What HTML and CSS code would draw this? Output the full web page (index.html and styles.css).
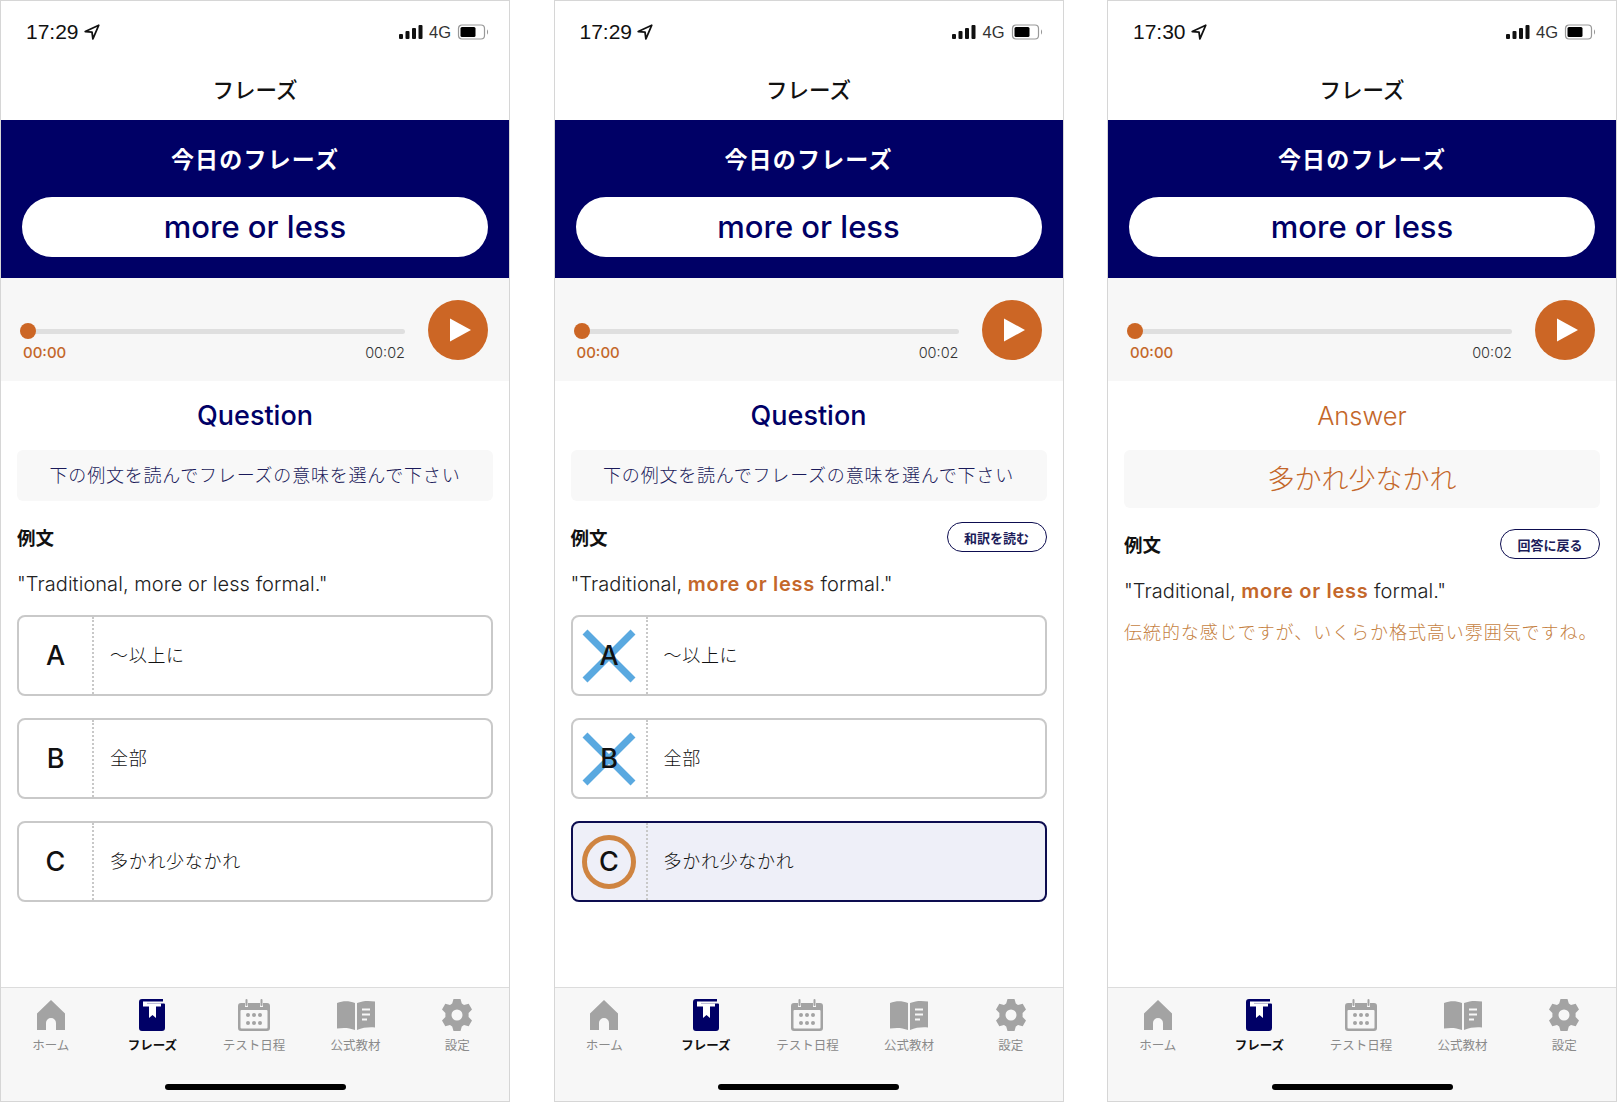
FILE: index.html
```html
<!DOCTYPE html>
<html lang="ja">

<head>
  <meta charset="UTF-8">
  <meta name="viewport" content="width=device-width, initial-scale=1.0">
  <title>フレーズ</title>
  <link rel="stylesheet" href="styles.css">
</head>

<body>

  <!-- Shared icons -->
  <svg class="icon-defs" width="0" height="0">
    <symbol id="i-arrow" viewBox="0 0 16 16">
      <path d="M14 2 2 7.6l6 .6.8 6z" fill="none" stroke="#111" stroke-width="1.6" stroke-linejoin="round" />
    </symbol>
    <symbol id="i-signal" viewBox="0 0 24 14">
      <rect x="0" y="9" width="4" height="5" rx="1" />
      <rect x="6.5" y="6" width="4" height="8" rx="1" />
      <rect x="13" y="3" width="4" height="11" rx="1" />
      <rect x="19.5" y="0" width="4" height="14" rx="1" />
    </symbol>
    <symbol id="i-battery" viewBox="0 0 32 16">
      <rect x="1" y="1" width="26" height="14" rx="3.5" fill="none" stroke="#999" stroke-width="1.2" />
      <rect x="3" y="3" width="15" height="10" rx="1.5" fill="#000" />
      <path d="M29.5 5.5c1.4.5 1.4 4.500 0 5z" fill="#999" />
    </symbol>
    <symbol id="i-play" viewBox="0 0 60 60">
      <circle cx="30" cy="30" r="30" fill="#cc6625" />
      <path d="M22 18.500 43 30 22 41.500z" fill="#fff" />
    </symbol>
    <symbol id="i-cross" viewBox="0 0 54 54">
      <path d="M3 3 51 51M51 3 3 51" stroke="#5aa9e0" stroke-width="7" />
    </symbol>
    <symbol id="i-ring" viewBox="0 0 54 54">
      <circle cx="27" cy="27" r="24.500" fill="none" stroke="#cf8441" stroke-width="5" />
    </symbol>
    <symbol id="i-home" viewBox="0 0 30 32">
      <path d="M15 1 29 14.500V31H20V24a5 5 0 0 0-10 0v7H1V14.500z" fill="#a3a3a3" />
    </symbol>
    <symbol id="i-book" viewBox="0 0 26 32">
      <path d="M3 0H24V2.500H8V4.500H25a1 1 0 0 1 1 1V29a3 3 0 0 1-3 3H3a3 3 0 0 1-3-3V3a3 3 0 0 1 3-3z" fill="#000066" />
      <path d="M4 2.500H8V4.500H22V7.500H17V19L13.500 16 10 19V7.500H4z" fill="#fff" />
    </symbol>
    <symbol id="i-calendar" viewBox="0 0 32 32">
      <path d="M3 4H7V8H10V4H22V8H25V4H29a3 3 0 0 1 3 3V29a3 3 0 0 1-3 3H3a3 3 0 0 1-3-3V7a3 3 0 0 1 3-3z" fill="#a3a3a3" />
      <rect x="7.500" y="0" width="2" height="7" rx="1" fill="#a3a3a3" />
      <rect x="22.500" y="0" width="2" height="7" rx="1" fill="#a3a3a3" />
      <rect x="2.500" y="11" width="27" height="18.500" rx="1" fill="#f7f7f7" />
      <g fill="#a3a3a3">
        <circle cx="10" cy="16" r="2" />
        <circle cx="16" cy="16" r="2" />
        <circle cx="22" cy="16" r="2" />
        <circle cx="10" cy="24" r="2" />
        <circle cx="16" cy="24" r="2" />
        <circle cx="22" cy="24" r="2" />
      </g>
    </symbol>
    <symbol id="i-reader" viewBox="0 0 38 30">
      <path d="M0 3C6 .5 12 .5 18 3V30C12 27.500 6 27.500 0 28.500z" fill="#a3a3a3" />
      <path d="M20 3C26 .5 32 .5 38 1.500V27.500C32 27 26 27.500 20 30z" fill="#a3a3a3" />
      <path d="M25 9.500H33M25 14.500H33M25 19.500H30" stroke="#f7f7f7" stroke-width="2" />
    </symbol>
    <symbol id="i-gear" viewBox="0 0 30 32">
      <path fill-rule="evenodd" fill="#a3a3a3" d="M11.500 0H18.500L19.800 4.600 22 5.900 26.700 4.700 30 10.500 26.600 14V18L30 21.500 26.700 27.300 22 26.100 19.800 27.400 18.500 32H11.500L10.200 27.400 8 26.100 3.300 27.300 0 21.500 3.400 18V14L0 10.500 3.300 4.700 8 5.900 10.200 4.600zM15 10.500a5.500 5.500 0 1 0 0 11 5.500 5.500 0 0 0 0-11z" />
    </symbol>
  </svg>

  <!-- Phone 1: question -->
  <section class="phone">
    <div class="status-bar">
      <div class="status-left">17:29 <svg class="arrow"><use href="#i-arrow" /></svg></div>
      <div class="status-right">
        <svg class="signal"><use href="#i-signal" /></svg><span>4G</span><svg class="battery"><use href="#i-battery" /></svg>
      </div>
    </div>
    <h2 class="nav-title">フレーズ</h2>
    <div class="hero">
      <p class="hero-label">今日のフレーズ</p>
      <div class="hero-pill">more or less</div>
    </div>
    <div class="player">
      <div class="player-track">
        <div class="track"><span class="thumb"></span></div>
        <div class="times"><span class="now">00:00</span><span>00:02</span></div>
      </div>
      <svg class="play"><use href="#i-play" /></svg>
    </div>
    <div class="content">
      <h3 class="section-title">Question</h3>
      <div class="prompt">下の例文を読んでフレーズの意味を選んで下さい</div>
      <div class="example-head">
        <span class="example-label">例文</span>
      </div>
      <p class="sentence">"Traditional, more or less formal."</p>
      <div class="options">
        <div class="option">
          <div class="option-key">A</div>
          <div class="option-text">〜以上に</div>
        </div>
        <div class="option">
          <div class="option-key">B</div>
          <div class="option-text">全部</div>
        </div>
        <div class="option">
          <div class="option-key">C</div>
          <div class="option-text">多かれ少なかれ</div>
        </div>
      </div>
    </div>
    <nav class="tabbar">
      <div class="tabs">
        <div class="tab"><svg class="tab-home"><use href="#i-home" /></svg><span>ホーム</span></div>
        <div class="tab active"><svg class="tab-book"><use href="#i-book" /></svg><span>フレーズ</span></div>
        <div class="tab"><svg class="tab-cal"><use href="#i-calendar" /></svg><span>テスト日程</span></div>
        <div class="tab"><svg class="tab-reader"><use href="#i-reader" /></svg><span>公式教材</span></div>
        <div class="tab"><svg class="tab-gear"><use href="#i-gear" /></svg><span>設定</span></div>
      </div>
      <div class="home-bar"></div>
    </nav>
  </section>

  <!-- Phone 2: answered -->
  <section class="phone">
    <div class="status-bar">
      <div class="status-left">17:29 <svg class="arrow"><use href="#i-arrow" /></svg></div>
      <div class="status-right">
        <svg class="signal"><use href="#i-signal" /></svg><span>4G</span><svg class="battery"><use href="#i-battery" /></svg>
      </div>
    </div>
    <h2 class="nav-title">フレーズ</h2>
    <div class="hero">
      <p class="hero-label">今日のフレーズ</p>
      <div class="hero-pill">more or less</div>
    </div>
    <div class="player">
      <div class="player-track">
        <div class="track"><span class="thumb"></span></div>
        <div class="times"><span class="now">00:00</span><span>00:02</span></div>
      </div>
      <svg class="play"><use href="#i-play" /></svg>
    </div>
    <div class="content">
      <h3 class="section-title">Question</h3>
      <div class="prompt">下の例文を読んでフレーズの意味を選んで下さい</div>
      <div class="example-head">
        <span class="example-label">例文</span>
        <button class="pill-button">和訳を読む</button>
      </div>
      <p class="sentence">"Traditional, <strong>more or less</strong> formal."</p>
      <div class="options">
        <div class="option">
          <div class="option-key"><svg class="mark"><use href="#i-cross" /></svg>A</div>
          <div class="option-text">〜以上に</div>
        </div>
        <div class="option">
          <div class="option-key"><svg class="mark"><use href="#i-cross" /></svg>B</div>
          <div class="option-text">全部</div>
        </div>
        <div class="option correct">
          <div class="option-key"><svg class="mark"><use href="#i-ring" /></svg>C</div>
          <div class="option-text">多かれ少なかれ</div>
        </div>
      </div>
    </div>
    <nav class="tabbar">
      <div class="tabs">
        <div class="tab"><svg class="tab-home"><use href="#i-home" /></svg><span>ホーム</span></div>
        <div class="tab active"><svg class="tab-book"><use href="#i-book" /></svg><span>フレーズ</span></div>
        <div class="tab"><svg class="tab-cal"><use href="#i-calendar" /></svg><span>テスト日程</span></div>
        <div class="tab"><svg class="tab-reader"><use href="#i-reader" /></svg><span>公式教材</span></div>
        <div class="tab"><svg class="tab-gear"><use href="#i-gear" /></svg><span>設定</span></div>
      </div>
      <div class="home-bar"></div>
    </nav>
  </section>

  <!-- Phone 3: translation -->
  <section class="phone">
    <div class="status-bar">
      <div class="status-left">17:30 <svg class="arrow"><use href="#i-arrow" /></svg></div>
      <div class="status-right">
        <svg class="signal"><use href="#i-signal" /></svg><span>4G</span><svg class="battery"><use href="#i-battery" /></svg>
      </div>
    </div>
    <h2 class="nav-title">フレーズ</h2>
    <div class="hero">
      <p class="hero-label">今日のフレーズ</p>
      <div class="hero-pill">more or less</div>
    </div>
    <div class="player">
      <div class="player-track">
        <div class="track"><span class="thumb"></span></div>
        <div class="times"><span class="now">00:00</span><span>00:02</span></div>
      </div>
      <svg class="play"><use href="#i-play" /></svg>
    </div>
    <div class="content">
      <h3 class="section-title answer">Answer</h3>
      <div class="prompt answer">多かれ少なかれ</div>
      <div class="example-head">
        <span class="example-label">例文</span>
        <button class="pill-button">回答に戻る</button>
      </div>
      <p class="sentence">"Traditional, <strong>more or less</strong> formal."</p>
      <p class="translation">伝統的な感じですが、いくらか格式高い雰囲気ですね。</p>
    </div>
    <nav class="tabbar">
      <div class="tabs">
        <div class="tab"><svg class="tab-home"><use href="#i-home" /></svg><span>ホーム</span></div>
        <div class="tab active"><svg class="tab-book"><use href="#i-book" /></svg><span>フレーズ</span></div>
        <div class="tab"><svg class="tab-cal"><use href="#i-calendar" /></svg><span>テスト日程</span></div>
        <div class="tab"><svg class="tab-reader"><use href="#i-reader" /></svg><span>公式教材</span></div>
        <div class="tab"><svg class="tab-gear"><use href="#i-gear" /></svg><span>設定</span></div>
      </div>
      <div class="home-bar"></div>
    </nav>
  </section>

</body>

</html>
```

FILE: styles.css
```css
/* Reset styles */
* {
  margin: 0;
  padding: 0;
  box-sizing: border-box;
}

body {
  width: 1618px;
  height: 1102px;
  display: flex;
  gap: 43.5px;
  background: #fff;
  overflow: hidden;
  font-family: Inter, "Noto Sans CJK JP", sans-serif;
  color: #222;
}

.icon-defs {
  position: absolute;
}

/* Phone frame */
.phone {
  width: 510px;
  height: 1102px;
  flex: none;
  display: flex;
  flex-direction: column;
  border: 1px solid #d6d6d6;
  background: #fff;
}

/* Status bar */
.status-bar {
  height: 62px;
  padding: 0 19px 0 25px;
  display: flex;
  justify-content: space-between;
  align-items: center;
  flex: none;
}

.status-left {
  display: flex;
  align-items: center;
  gap: 4px;
  font-family: "Liberation Sans", sans-serif;
  font-size: 21px;
  color: #111;
}

.arrow {
  width: 18px;
  height: 18px;
}

.status-right {
  display: flex;
  align-items: center;
  font-family: "Liberation Sans", sans-serif;
  font-size: 16.5px;
  color: #333;
}

.signal {
  width: 24px;
  height: 14px;
  margin-right: 6px;
  fill: #111;
}

.battery {
  width: 33px;
  height: 16px;
  margin-left: 6px;
}

/* Title */
.nav-title {
  height: 57px;
  line-height: 55px;
  flex: none;
  text-align: center;
  font-size: 21.5px;
  font-weight: 500;
  color: #111;
}

/* Navy phrase banner */
.hero {
  height: 158px;
  flex: none;
  background: #000066;
  padding: 20px 21px 0;
  color: #fff;
}

.hero-label {
  height: 38px;
  line-height: 40px;
  text-align: center;
  font-size: 23px;
  font-weight: 700;
  letter-spacing: 1.2px;
}

.hero-pill {
  height: 60px;
  margin-top: 19px;
  line-height: 60px;
  border-radius: 30px;
  background: #fff;
  text-align: center;
  font-size: 31px;
  font-weight: 500;
  color: #000066;
}

/* Audio player */
.player {
  height: 103px;
  flex: none;
  background: #f7f7f7;
  padding: 22px 21px 0 19px;
  display: flex;
  gap: 23px;
}

.player-track {
  flex: 1;
  padding-top: 29px;
}

.track {
  position: relative;
  height: 5px;
  border-radius: 3px;
  background: #dfdfdf;
}

.thumb {
  position: absolute;
  left: 0;
  top: -6px;
  width: 16px;
  height: 16px;
  border-radius: 50%;
  background: #cc6625;
}

.times {
  display: flex;
  justify-content: space-between;
  margin-top: 9px;
  padding-left: 3px;
  font-size: 14.5px;
  font-weight: 300;
  line-height: 20px;
  color: #333;
}

.now {
  color: #c4672a;
  font-weight: 500;
  font-size: 15px;
}

.play {
  width: 60px;
  height: 60px;
  flex: none;
}

/* Main content */
.content {
  flex: 1;
  padding: 0 16px;
}

.section-title {
  height: 69px;
  line-height: 69px;
  text-align: center;
  font-size: 27px;
  font-weight: 500;
  color: #000066;
}

.section-title.answer {
  font-size: 25.5px;
  font-weight: 300;
  color: #c4672a;
}

.prompt {
  height: 51px;
  line-height: 51px;
  border-radius: 6px;
  background: #f8f8f8;
  text-align: center;
  font-size: 18px;
  letter-spacing: 0.8px;
  font-weight: 300;
  color: #1a1a5a;
}

.prompt.answer {
  height: 58px;
  line-height: 60px;
  font-size: 27px;
  letter-spacing: 0;
  color: #c4672a;
}

.example-head {
  height: 30px;
  margin-top: 21px;
  display: flex;
  justify-content: space-between;
  align-items: center;
}

.example-label {
  font-size: 18.5px;
  font-weight: 700;
  color: #111;
}

.pill-button {
  width: 100px;
  height: 30px;
  border: 1.5px solid #0d0d50;
  border-radius: 15px;
  background: #fff;
  font-family: inherit;
  font-size: 13px;
  font-weight: 700;
  color: #1c1c5a;
}

.sentence {
  margin-top: 17px;
  line-height: 30px;
  font-size: 20px;
  font-weight: 300;
  letter-spacing: 0.06px;
  color: #222;
}

.sentence strong {
  font-weight: 600;
  letter-spacing: 0.7px;
  color: #c4672a;
}

.translation {
  margin-top: 12px;
  line-height: 30px;
  font-size: 18px;
  letter-spacing: 0.95px;
  font-weight: 300;
  white-space: nowrap;
  color: #c57f42;
}

/* Answer choices */
.options {
  margin-top: 16px;
  display: flex;
  flex-direction: column;
  gap: 22px;
}

.option {
  height: 81px;
  display: flex;
  border: 2px solid #c9c9c9;
  border-radius: 8px;
  background: #fff;
}

.option.correct {
  border: 2.5px solid #0d0d50;
  background: #eeeff8;
}

.option-key {
  position: relative;
  z-index: 0;
  width: 75px;
  flex: none;
  display: flex;
  align-items: center;
  justify-content: center;
  border-right: 2px dotted #c8c8c8;
  font-size: 27px;
  font-weight: 500;
  color: #111;
}

.mark {
  position: absolute;
  z-index: -1;
  left: 9px;
  top: 12px;
  width: 54px;
  height: 54px;
}

.option-text {
  flex: 1;
  padding: 0 0 3px 16px;
  display: flex;
  align-items: center;
  font-size: 18px;
  letter-spacing: 0.7px;
  font-weight: 300;
  color: #111;
}

/* Bottom tab bar */
.tabbar {
  height: 114px;
  flex: none;
  background: #f7f7f7;
  border-top: 1px solid #dcdcdc;
  display: flex;
  flex-direction: column;
}

.tabs {
  display: grid;
  grid-template-columns: repeat(5, 101.6px);
  margin-left: -1px;
  padding-top: 11px;
}

.tab {
  display: flex;
  flex-direction: column;
  align-items: center;
  font-size: 12.5px;
  line-height: 20px;
  color: #8a8a8a;
}

.tab svg {
  height: 32px;
  margin-bottom: 5px;
}

.tab span {
  white-space: nowrap;
}

.tab.active {
  color: #111;
  font-weight: 700;
}

.tab-home { width: 30px; }
.tab-book { width: 26px; }
.tab-cal { width: 32px; }
.tab-reader { width: 38px; }
.tab-gear { width: 30px; }

.home-bar {
  width: 181px;
  height: 6px;
  margin: 28px auto 0;
  border-radius: 3px;
  background: #000;
}
```
